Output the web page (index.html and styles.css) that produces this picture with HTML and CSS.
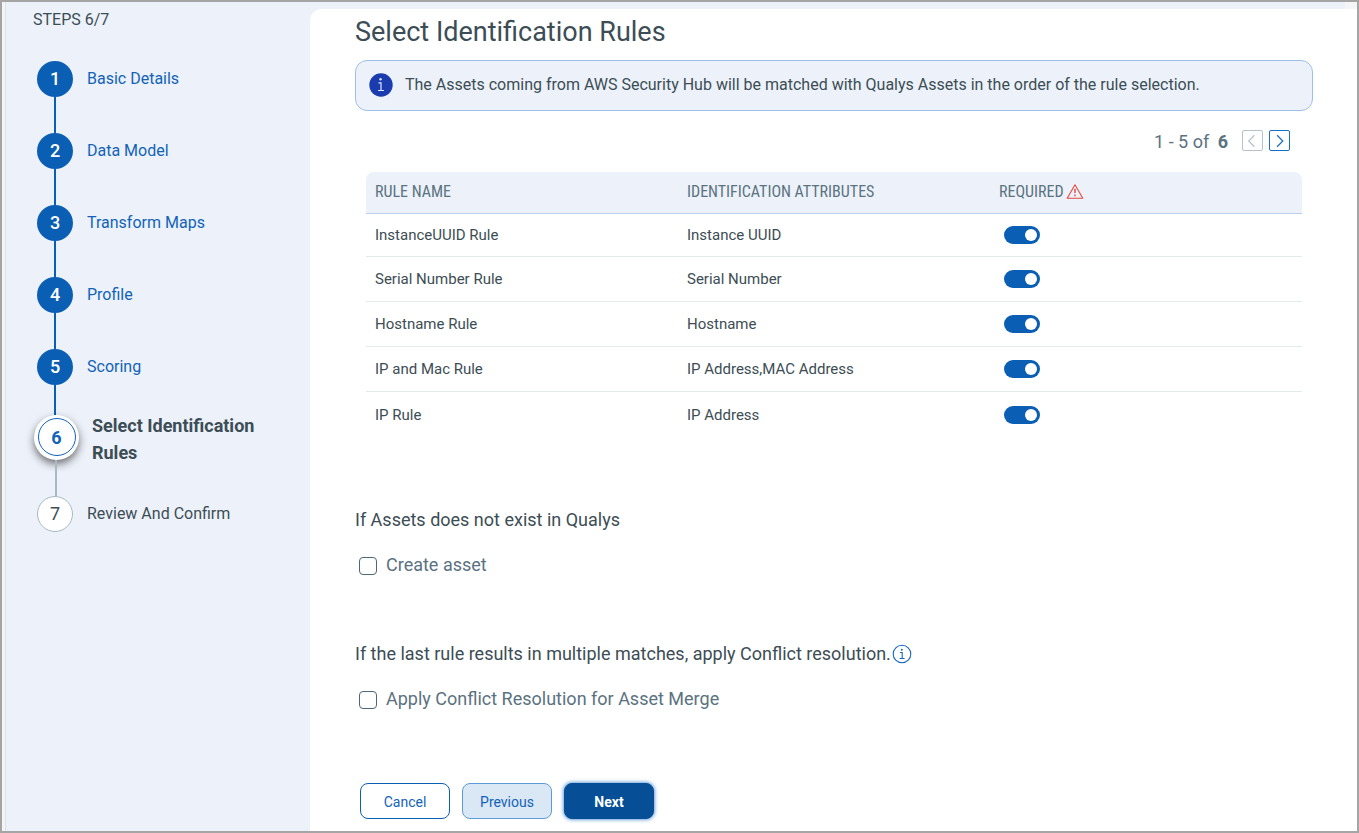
FILE: index.html
```html
<!DOCTYPE html>
<html lang="en">
<head>
<meta charset="UTF-8">
<meta name="viewport" content="width=device-width, initial-scale=1">
<title>Select Identification Rules</title>
<link rel="stylesheet" href="styles.css">
</head>
<body>
<div class="wizard">
    <nav class="sidebar">
        <p class="steps-count">STEPS 6/7</p>
        <ol class="steps">
            <li class="step done"><span class="num">1</span><a class="step-label" href="#">Basic Details</a></li>
            <li class="step done"><span class="num">2</span><a class="step-label" href="#">Data Model</a></li>
            <li class="step done"><span class="num">3</span><a class="step-label" href="#">Transform Maps</a></li>
            <li class="step done"><span class="num">4</span><a class="step-label" href="#">Profile</a></li>
            <li class="step done last-done"><span class="num">5</span><a class="step-label" href="#">Scoring</a></li>
            <li class="step current"><span class="num"><span class="ring">6</span></span><span class="step-label">Select Identification Rules</span></li>
            <li class="step todo"><span class="num">7</span><span class="step-label">Review And Confirm</span></li>
        </ol>
    </nav>
    <main class="content">
        <h1 class="title">Select Identification Rules</h1>
        <div class="notice">
            <svg class="notice-icon" width="24" height="24" viewBox="0 0 24 24" fill="none">
                <circle cx="12" cy="12" r="11.7" fill="#1a3caf"/>
                <circle cx="11.5" cy="6.2" r="1.2" fill="#dfe7fa"/>
                <path d="M9.5 9.8H12V17.5M9 17.5H15" stroke="#dfe7fa" stroke-width="1.2"/>
            </svg>
            <span>The Assets coming from AWS Security Hub will be matched with Qualys Assets in the order of the rule selection.</span>
        </div>

        <div class="pager">
            <span class="pager-text">1 - 5 of <b>6</b></span>
            <button class="page-btn" type="button" aria-label="Previous page" disabled>
                <svg width="20" height="20" viewBox="0 0 20 20" fill="none" stroke="currentColor" stroke-width="1.3"><path d="M12 4L6 10L12 16"/></svg>
            </button>
            <button class="page-btn" type="button" aria-label="Next page">
                <svg width="20" height="20" viewBox="0 0 20 20" fill="none" stroke="currentColor" stroke-width="1.3"><path d="M7.5 4L13.5 10L7.5 16"/></svg>
            </button>
        </div>

        <table class="rules">
            <thead>
                <tr>
                    <th>RULE NAME</th>
                    <th>IDENTIFICATION ATTRIBUTES</th>
                    <th>
                        <span class="required">REQUIRED
                            <svg width="18" height="16" viewBox="0 0 18 16" fill="none" stroke="#e5483f">
                                <path d="M9 0.8L16.8 14.2H1.2Z" stroke-width="1.1" stroke-linejoin="round"/>
                                <path d="M9 4.8V9M9 10.6V12.2" stroke-width="1.4"/>
                            </svg>
                        </span>
                    </th>
                </tr>
            </thead>
            <tbody>
                <tr><td>InstanceUUID Rule</td><td>Instance UUID</td><td><input class="toggle" type="checkbox" aria-label="InstanceUUID Rule required" checked></td></tr>
                <tr><td>Serial Number Rule</td><td>Serial Number</td><td><input class="toggle" type="checkbox" aria-label="Serial Number Rule required" checked></td></tr>
                <tr><td>Hostname Rule</td><td>Hostname</td><td><input class="toggle" type="checkbox" aria-label="Hostname Rule required" checked></td></tr>
                <tr><td>IP and Mac Rule</td><td>IP Address,MAC Address</td><td><input class="toggle" type="checkbox" aria-label="IP and Mac Rule required" checked></td></tr>
                <tr><td>IP Rule</td><td>IP Address</td><td><input class="toggle" type="checkbox" aria-label="IP Rule required" checked></td></tr>
            </tbody>
        </table>

        <section class="option">
            <h2>If Assets does not exist in Qualys</h2>
            <div class="check-row">
                <input class="check" type="checkbox" id="create-asset">
                <label for="create-asset">Create asset</label>
            </div>
        </section>

        <section class="option">
            <h2>If the last rule results in multiple matches, apply Conflict resolution.
                <svg width="20" height="20" viewBox="0 0 20 20" fill="none" stroke="#1468be">
                    <circle cx="10" cy="10" r="8.8" stroke-width="1.1"/>
                    <circle cx="9.8" cy="5.8" r="1" fill="#1468be" stroke="none"/>
                    <path d="M8 8.5H10.2V14.5M7.6 14.5H12.6" stroke-width="1.1"/>
                </svg>
            </h2>
            <div class="check-row">
                <input class="check" type="checkbox" id="apply-conflict">
                <label for="apply-conflict">Apply Conflict Resolution for Asset Merge</label>
            </div>
        </section>

        <div class="actions">
            <button class="btn" type="button">Cancel</button>
            <button class="btn btn-previous" type="button">Previous</button>
            <button class="btn btn-next" type="button">Next</button>
        </div>
    </main>
</div>
</body>
</html>
```
FILE: styles.css
```css
* {
    box-sizing: border-box;
    margin: 0;
    padding: 0;
}

body {
    font-family: Roboto, "Liberation Sans", sans-serif;
    font-size: 15px;
    color: #3c4d55;
    background-color: #fff;
}

.wizard {
    display: flex;
    min-height: 100vh;
    padding-left: 3px;
    border: 2px solid #a5a5a5;
    background-color: #f4f5f7;
}

/* left column */
.sidebar {
    flex: 0 0 305px;
    padding: 8px 40px 0 27px;
    border-left: 1px solid #dfe1e5;
    background-color: #edf2fa;
}

.steps-count {
    font-size: 16px;
    line-height: 20px;
    margin-bottom: 31px;
}

.steps {
    list-style: none;
    padding-left: 4px;
}

.step {
    display: grid;
    grid-template-columns: 36px 1fr;
    grid-template-rows: auto 1fr;
    column-gap: 14px;
    min-height: 72px;
}

.num {
    display: flex;
    align-items: center;
    justify-content: center;
    width: 36px;
    height: 36px;
    padding-bottom: 1px;
    border-radius: 50%;
    font-size: 18px;
    font-weight: 500;
}

/* line down to the next step */
.step::after {
    content: "";
    grid-column: 1;
    justify-self: center;
    width: 2px;
    background-color: #0a5fb4;
}

.step-label {
    align-self: center;
    font-size: 16px;
    line-height: 20px;
    text-decoration: none;
}

.done .num {
    background-color: #0a5fb4;
    color: #fff;
}

.done .step-label {
    color: #1263b8;
}

.last-done {
    min-height: 66px;
}

.current {
    grid-template-columns: 44px 1fr;
    min-height: 81px;
    margin-left: -3px;
}

.current .num {
    width: 45px;
    height: 45px;
    background-color: #fff;
    box-shadow: 0 4px 8px rgba(0, 0, 0, 0.55);
}

.current .ring {
    display: flex;
    align-items: center;
    justify-content: center;
    width: 38px;
    height: 38px;
    border: 1px solid #1263b8;
    border-radius: 50%;
    color: #1263b8;
    font-weight: 700;
}

.current .step-label {
    align-self: start;
    height: 45px;
    margin-top: -3px;
    font-size: 18px;
    font-weight: 700;
    line-height: 27px;
}

.current::after {
    background-color: #a9b9c2;
}

.todo {
    min-height: 36px;
}

.todo .num {
    border: 1px solid #a9b9c2;
    background-color: #fff;
    font-weight: 400;
}

.todo::after {
    display: none;
}

/* right part */
.content {
    flex: 1;
    min-width: 0;
    margin-top: 7px;
    padding: 7px 44px 10px 45px;
    border-top-left-radius: 12px;
    background-color: #fff;
    box-shadow: -12px -12px 0 #edf2fa;
    clip-path: inset(-7px 0 0 -5px);
}

.title {
    font-size: 27px;
    font-weight: 400;
    line-height: 32px;
}

.notice {
    display: flex;
    align-items: center;
    gap: 12px;
    min-height: 51px;
    margin-top: 12px;
    padding: 0 13px 2px;
    border: 1px solid #9cc0e6;
    border-radius: 12px;
    background-color: #edf2fa;
    font-size: 16px;
}

.pager {
    display: flex;
    align-items: center;
    justify-content: flex-end;
    gap: 6px;
    margin: 18px 23px 20px 0;
}

.pager-text {
    padding-top: 2px;
    margin-right: 8px;
    font-size: 18px;
    color: #5b7280;
}

.pager-text b {
    margin-left: 4px;
}

.page-btn {
    display: flex;
    align-items: center;
    justify-content: center;
    width: 21px;
    height: 21px;
    border: 1px solid #1a6fc4;
    border-radius: 2px;
    background-color: #fff;
    color: #1a6fc4;
}

.page-btn:disabled {
    border-color: #b6c3ca;
    color: #b6c3ca;
}

.rules {
    width: calc(100% - 22px);
    margin: 0 11px;
    table-layout: fixed;
    border-collapse: separate;
    border-spacing: 0;
}

.rules th {
    height: 42px;
    padding: 0 9px 2px;
    border-bottom: 1px solid #b9cfea;
    background-color: #edf2fa;
    font-family: "Roboto Condensed", Roboto, sans-serif;
    font-size: 16px;
    font-weight: 400;
    text-align: left;
    color: #5b7280;
}

.rules th:first-child {
    border-top-left-radius: 8px;
}

.rules th:last-child {
    border-top-right-radius: 8px;
}

.required {
    display: flex;
    align-items: center;
    gap: 2px;
}

.rules td {
    height: 45px;
    padding: 0 9px;
    border-bottom: 1px solid #e2eaed;
}

.rules tbody tr:first-child td {
    height: 43px;
    padding-bottom: 1px;
}

.rules tbody tr:last-child td {
    border-bottom: 0;
}

.toggle {
    appearance: none;
    display: block;
    width: 36px;
    height: 18px;
    margin-left: 5px;
    padding: 3px;
    border-radius: 9px;
    background-color: #a9b9c2;
}

.toggle::before {
    content: "";
    display: block;
    width: 12px;
    height: 12px;
    border-radius: 50%;
    background-color: #fff;
}

.toggle:checked {
    background-color: #0a5fb4;
}

.toggle:checked::before {
    margin-left: auto;
}

.option {
    margin-top: 65px;
}

.rules + .option {
    margin-top: 71px;
}

.option h2 {
    display: flex;
    align-items: center;
    gap: 1px;
    font-size: 18px;
    font-weight: 400;
    line-height: 24px;
}

.check-row {
    display: flex;
    align-items: center;
    gap: 9px;
    margin: 21px 4px 0;
    font-size: 18px;
    line-height: 24px;
    color: #5b7280;
}

.check {
    appearance: none;
    width: 18px;
    height: 18px;
    margin-top: 2px;
    border: 1px solid #4e6775;
    border-radius: 4px;
    background-color: #fff;
}

.check:checked {
    background-color: #0a5fb4;
}

.actions {
    display: flex;
    gap: 12px;
    margin: 72px 5px 0;
}

.btn {
    width: 90px;
    height: 36px;
    padding-top: 2px;
    border: 1px solid #0a5fb4;
    border-radius: 8px;
    background-color: #fff;
    font-family: inherit;
    font-size: 14px;
    color: #1263b8;
}

.btn-previous {
    border-color: #5b9bd8;
    background-color: #dae7f5;
}

.btn-next {
    border-color: #064f96;
    background-color: #064f96;
    box-shadow: 0 0 4px #1a6fc4;
    color: #fff;
    font-weight: 700;
}
```
